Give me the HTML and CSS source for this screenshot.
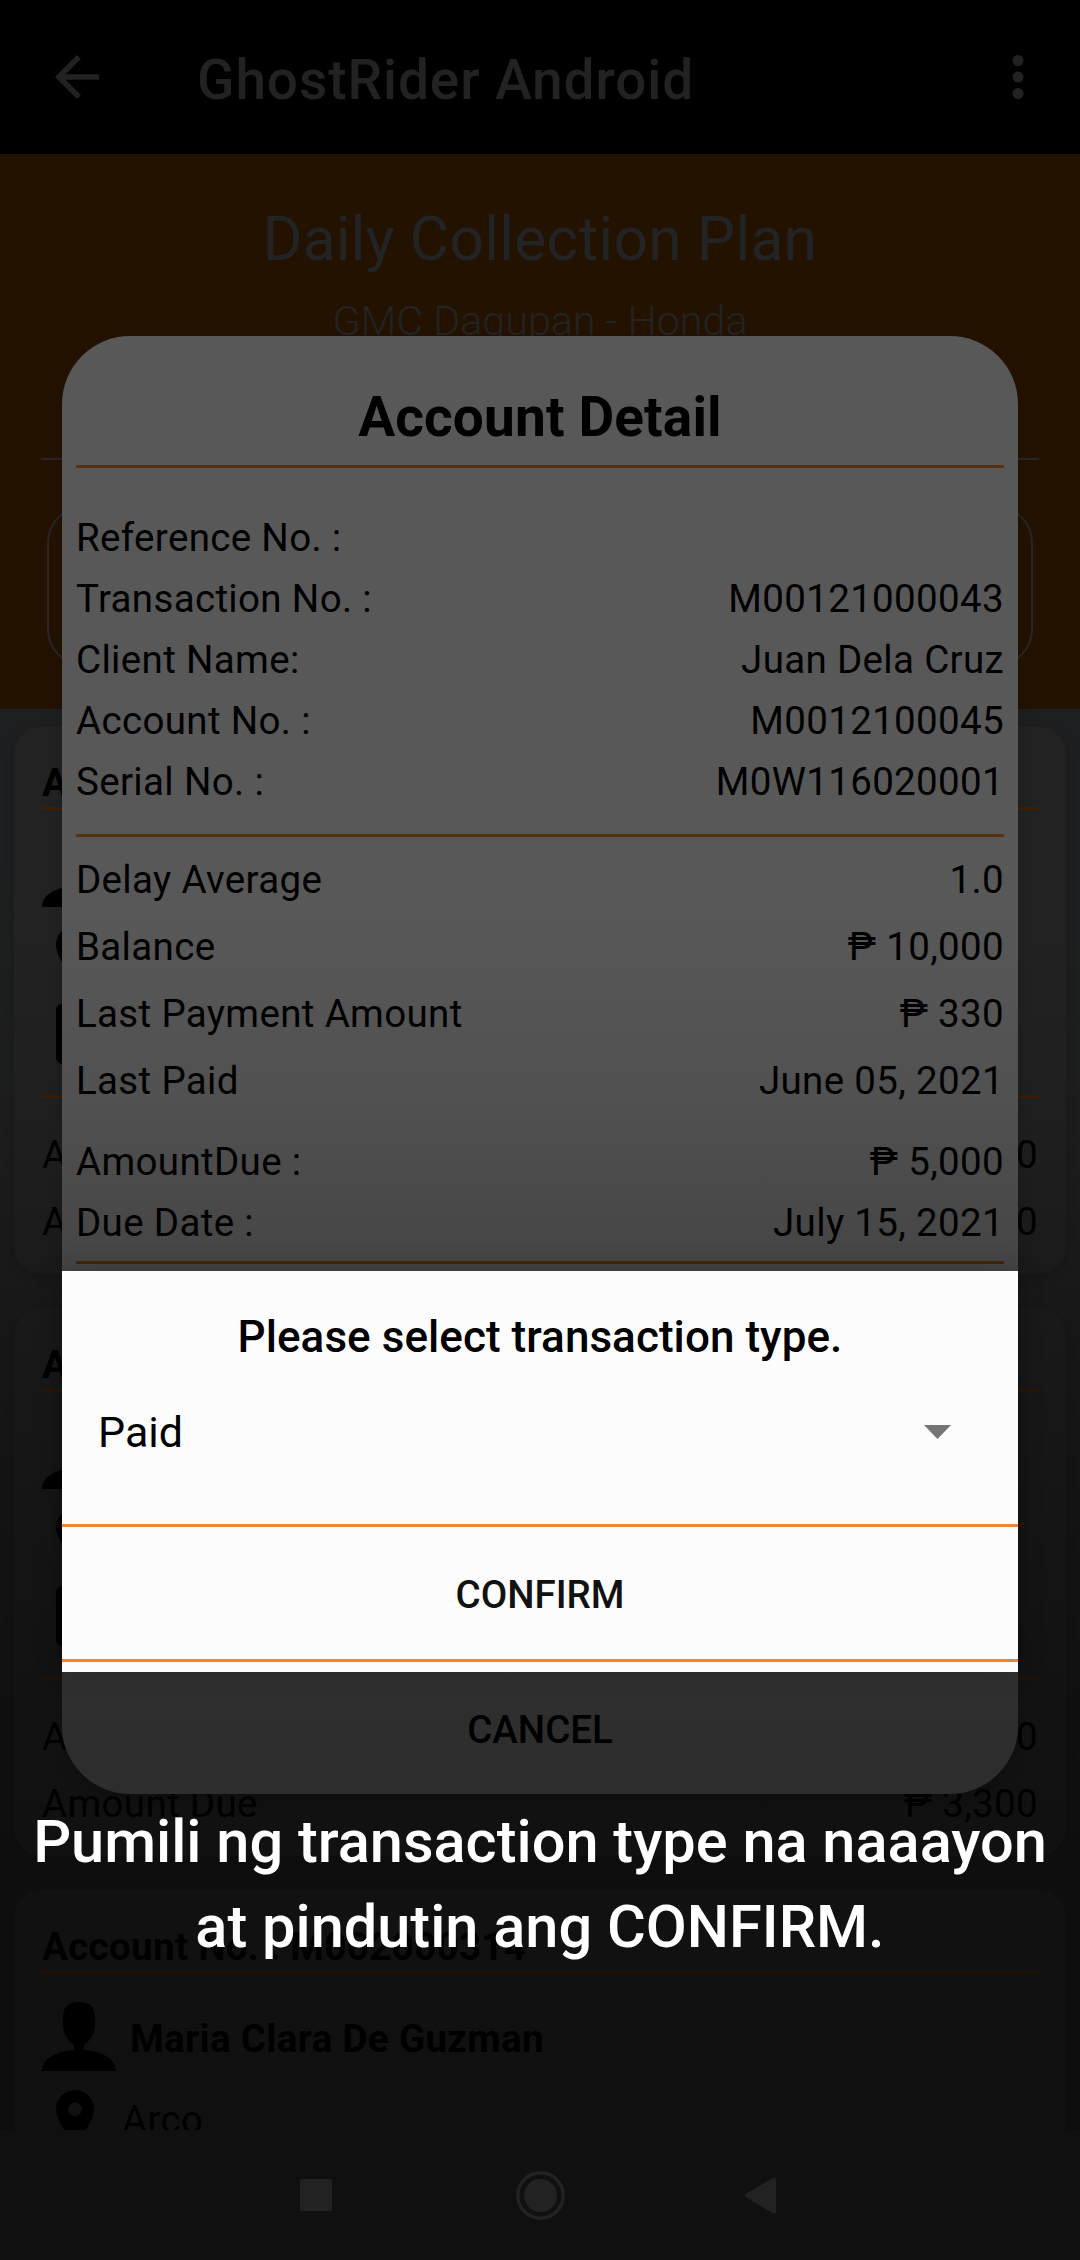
FILE: index.html
```html
<!DOCTYPE html>
<html lang="en">
<head>
<meta charset="utf-8">
<title>GhostRider Android</title>
<link rel="stylesheet" href="styles.css">
</head>
<body>
<svg width="0" height="0" class="defs">
  <symbol id="person" viewBox="0 0 74 69"><path d="M37 0C48 0 53 5 53 15v8c0 9-5 16-11 20v5c18 1 32 9 32 21H0c0-12 14-20 32-21v-5c-6-4-11-11-11-20V15C21 5 26 0 37 0z"/></symbol>
  <symbol id="pin" viewBox="0 0 38 54"><path fill-rule="evenodd" d="M19 0C8.500 0 0 8.500 0 19c0 14 19 35 19 35s19-21 19-35C38 8.500 29.500 0 19 0zm0 12.500a6.800 6.800 0 1 1 0 13.600 6.800 6.800 0 0 1 0-13.600z"/></symbol>
  <symbol id="sheet" viewBox="0 0 54 60"><rect x="3" y="3" width="48" height="54" rx="3" fill="none" stroke="#000" stroke-width="6"/></symbol>
</svg>
<div class="phone">
  <header class="appbar">
    <svg class="icon" viewBox="0 0 24 24"><path d="M20 11H7.830l5.590-5.590L12 4l-8 8 8 8 1.410-1.410L7.830 13H20v-2z"/></svg>
    <h1>GhostRider Android</h1>
    <svg class="icon more" viewBox="0 0 24 24"><circle cx="12" cy="6" r="2"/><circle cx="12" cy="12" r="2"/><circle cx="12" cy="18" r="2"/></svg>
  </header>
  <section class="hero">
    <h2>Daily Collection Plan</h2>
    <p>GMC Dagupan - Honda</p>
    <div class="hero-line"></div>
    <div class="hero-box"></div>
  </section>
  <main class="list">
    <article class="card">
      <h3>Account No. :</h3>
      <div class="body">
        <div class="person"><svg><use href="#person"/></svg></div>
        <div class="place"><svg><use href="#pin"/></svg></div>
        <svg class="sheet"><use href="#sheet"/></svg>
      </div>
      <div class="line"><span>Amount</span><span>0</span></div>
      <div class="line"><span>Amount Due</span><span>0</span></div>
    </article>
    <article class="card">
      <h3>Account No. :</h3>
      <div class="body">
        <div class="person"><svg><use href="#person"/></svg></div>
        <div class="place"><svg><use href="#pin"/></svg></div>
        <svg class="sheet"><use href="#sheet"/></svg>
      </div>
      <div class="line"><span>Amount</span><span>0</span></div>
      <div class="line"><span>Amount Due</span><span>₱ 3,300</span></div>
    </article>
    <article class="card">
      <h3>Account No. : M002000314</h3>
      <div class="body">
        <div class="person"><svg><use href="#person"/></svg><b>Maria Clara De Guzman</b></div>
        <div class="place"><svg><use href="#pin"/></svg><span>Arco</span></div>
      </div>
    </article>
  </main>
  <nav class="navbar">
    <svg viewBox="0 0 1080 130">
      <rect x="300" y="49" width="32" height="32" rx="2"/>
      <circle cx="540.500" cy="65.500" r="16.500"/>
      <circle cx="540.500" cy="65.500" r="22.700" fill="none" stroke="#222" stroke-width="3.500"/>
      <path d="M747 65.500L774 49.500v32z" stroke="#222" stroke-width="4" stroke-linejoin="round"/>
    </svg>
  </nav>

  <div class="modal">
    <section class="detail">
      <h2>Account Detail</h2>
      <dl class="ids">
        <div><dt>Reference No. :</dt><dd></dd></div>
        <div><dt>Transaction No. :</dt><dd>M00121000043</dd></div>
        <div><dt>Client Name:</dt><dd>Juan Dela Cruz</dd></div>
        <div><dt>Account No. :</dt><dd>M0012100045</dd></div>
        <div><dt>Serial No. :</dt><dd>M0W116020001</dd></div>
      </dl>
      <dl class="sums">
        <div><dt>Delay Average</dt><dd>1.0</dd></div>
        <div><dt>Balance</dt><dd>₱ 10,000</dd></div>
        <div><dt>Last Payment Amount</dt><dd>₱ 330</dd></div>
        <div><dt>Last Paid</dt><dd>June 05, 2021</dd></div>
      </dl>
      <dl class="due">
        <div><dt>AmountDue :</dt><dd>₱ 5,000</dd></div>
        <div><dt>Due Date :</dt><dd>July 15, 2021</dd></div>
      </dl>
    </section>
    <section class="picker">
      <h3>Please select transaction type.</h3>
      <div class="select"><span>Paid</span><svg viewBox="0 0 27 14"><path d="M0 0h27L13.500 14z"/></svg></div>
      <div class="confirm">CONFIRM</div>
    </section>
    <div class="cancel">CANCEL</div>
  </div>
  <div class="shade"></div>
  <p class="caption">Pumili ng transaction type na naaayon<br>at pindutin ang CONFIRM.</p>
</div>
</body>
</html>
```
FILE: styles.css
```css
* { box-sizing: border-box; margin: 0; padding: 0; }
body { background: #101010; font-family: Roboto, sans-serif; font-size: 38.5px; color: #000; }
.defs { position: absolute; }
.phone { position: relative; width: 1080px; height: 2260px; overflow: hidden; display: flex; flex-direction: column; }

.appbar { height: 154px; background: #000; color: #222; display: flex; align-items: center; padding: 0 28px 0 44px; }
.appbar .icon { width: 66px; height: 66px; fill: #222; }
.appbar h1 { flex: 1; margin-left: 87px; padding-top: 6px; font-size: 55px; font-weight: 500; line-height: 80px; letter-spacing: .92px; }
.appbar .more { margin-right: 1px; }

.hero { height: 555px; background: #231200; color: #222325; text-align: center; }
.hero h2 { padding-top: 46px; font-size: 60.5px; font-weight: 400; line-height: 80px; letter-spacing: .25px; }
.hero p { margin-top: 11px; font-size: 41.25px; font-weight: 300; line-height: 60px; }
.hero-line { margin: 107px 41px 0; height: 2px; background: #282624; }
.hero-box { margin: 45px 47px 0; height: 162px; border: 2px solid #292725; border-radius: 38px; }

.list { height: 1421px; overflow: hidden; background: linear-gradient(#1d1f21, #1e1f1f 300px, #202020 630px, #1d1d1d 1200px); padding: 17px 14px 0; display: flex; flex-direction: column; gap: 34px; letter-spacing: .34px; }
.card { flex: none; height: 548px; padding: 27px 28px 0; border-radius: 28px; background: #222; box-shadow: 0 3px 8px 2px rgba(0,0,0,.12); }
.card h3 { height: 57px; border-bottom: 3px solid #3e2105; font-size: 38.5px; font-weight: 700; line-height: 60px; }
.body { height: 288px; border-bottom: 3px solid #3e2105; padding-top: 28px; margin-bottom: 23px; }
.person { display: flex; height: 69px; gap: 14px; }
.person svg { width: 74px; height: 69px; }
.person b { padding-top: 7px; line-height: 60px; }
.place { display: flex; height: 54px; margin: 19px 0 0 14px; gap: 28px; }
.place svg { width: 38px; height: 54px; }
.place span { line-height: 59px; }
.sheet { display: block; width: 54px; height: 60px; margin: 24px 0 0 14px; }
.line { display: flex; justify-content: space-between; height: 67px; line-height: 67px; }

.navbar { height: 130px; background: #101010; }
.navbar svg { display: block; fill: #222; }

.modal { position: absolute; left: 62px; top: 336px; width: 956px; height: 1458px; border-radius: 68px; background: #585858; box-shadow: 0 8px 14px rgba(0,0,0,.18); }
.detail { height: 935px; padding: 41px 14px 0; letter-spacing: .34px; }
.detail h2 { height: 91px; border-bottom: 3px solid #57300f; text-align: center; font-size: 55px; font-weight: 700; line-height: 80px; letter-spacing: .12px; }
.detail dl > div { display: flex; justify-content: space-between; height: 61px; line-height: 61px; }
.ids { height: 369px; padding-top: 39px; border-bottom: 3px solid #57300f; }
.sums { padding-top: 9px; }
.detail .sums > div { height: 67px; line-height: 67px; }
.due { height: 150px; padding-top: 17px; border-bottom: 3px solid #57300f; }

.picker { position: relative; z-index: 3; height: 401px; padding-top: 26px; background: #fcfcfc; box-shadow: 0 0 26px rgba(0,0,0,.2); }
.picker h3 { text-align: center; font-size: 44px; font-weight: 500; line-height: 80px; letter-spacing: .05px; }
.select { display: flex; align-items: center; justify-content: space-between; height: 80px; margin-top: 15px; padding: 0 67px 0 36px; font-size: 43px; }
.select svg { width: 27px; height: 14px; fill: #757575; }
.confirm { height: 138px; margin-top: 52px; padding-top: 2px; border-top: 3px solid #ef8633; border-bottom: 3px solid #fa8226; color: #111; text-align: center; font-weight: 500; line-height: 132px; }
.cancel { text-align: center; font-weight: 500; line-height: 115px; }

.shade { position: absolute; z-index: 2; inset: 900px 0 130px; background: linear-gradient(rgba(0,0,0,0) 0, rgba(0,0,0,.02) 60px, rgba(0,0,0,.09) 210px, rgba(0,0,0,.2) 340px, rgba(0,0,0,.28) 430px, rgba(0,0,0,.39) 620px, rgba(0,0,0,.47) 800px, rgba(0,0,0,.5) 940px, rgba(0,0,0,.53) 1230px); }
.caption { position: absolute; z-index: 3; left: 0; top: 1800px; width: 1080px; color: #fff; text-align: center; font-size: 59.5px; font-weight: 500; line-height: 85px; white-space: nowrap; }
```
